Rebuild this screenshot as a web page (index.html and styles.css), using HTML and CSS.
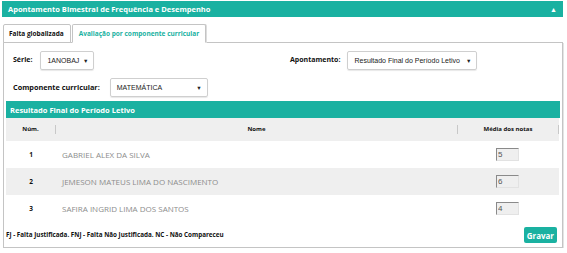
FILE: index.html
```html
<!DOCTYPE html>
<html lang="pt-BR">
<head>
  <meta charset="UTF-8" />
  <title>Apontamento Bimestral</title>
  <link rel="stylesheet" href="styles.css">
</head>
<body>
  <div class="panel">
    <div class="panel-head">
      <span>Apontamento Bimestral de Frequência e Desempenho</span>
      <span class="caret">&#9650;</span>
    </div>

    <div class="tabs">
      <div class="tab">Falta globalizada</div>
      <div class="tab active">Avaliação por componente curricular</div>
    </div>

    <div class="tab-body">
      <div class="filters">
        <div class="field serie">
          <label>Série:</label>
          <div class="select w-serie"><span>1ANOBAJ</span><span class="arrow">&#9660;</span></div>
        </div>
        <div class="field apont">
          <label>Apontamento:</label>
          <div class="select w-apont"><span>Resultado Final do Período Letivo</span><span class="arrow">&#9660;</span></div>
        </div>
      </div>
      <div class="filters second">
        <div class="field comp">
          <label>Componente curricular:</label>
          <div class="select w-comp"><span>MATEMÁTICA</span><span class="arrow">&#9660;</span></div>
        </div>
      </div>

      <div class="result-bar">Resultado Final do Período Letivo</div>

      <table class="grid">
        <thead>
          <tr>
            <th class="c-num"><span class="sep">Núm.</span></th>
            <th class="c-nome"><span class="sep">Nome</span></th>
            <th class="c-media"><span class="sep">Média dos notas</span></th>
          </tr>
        </thead>
        <tbody>
          <tr>
            <td class="c-num">1</td>
            <td class="c-nome">GABRIEL ALEX DA SILVA</td>
            <td class="c-media"><input type="text" value="5" /></td>
          </tr>
          <tr class="alt">
            <td class="c-num">2</td>
            <td class="c-nome">JEMESON MATEUS LIMA DO NASCIMENTO</td>
            <td class="c-media"><input type="text" value="6" /></td>
          </tr>
          <tr>
            <td class="c-num">3</td>
            <td class="c-nome">SAFIRA INGRID LIMA DOS SANTOS</td>
            <td class="c-media"><input type="text" value="4" /></td>
          </tr>
        </tbody>
      </table>

      <div class="foot">
        <p class="legend">FJ - Falta Justificada. FNJ - Falta Não Justificada. NC - Não Compareceu</p>
        <button type="button">Gravar</button>
      </div>
    </div>
  </div>
</body>
</html>
```

FILE: styles.css
```css
body {
  margin: 0;
  font-family: "Open Sans", Arial, sans-serif;
  background: #fff;
}
.panel {
  width: 561px;
  margin: 1px 0 0 2px;
}
.panel-head {
  height: 16px;
  background: #1ab1a1;
  color: #fff;
  font-size: 7.5px;
  font-weight: 700;
  display: flex;
  align-items: center;
  justify-content: space-between;
  padding: 0 6px 0 6px;
}
.caret {
  font-size: 7px;
}
.tabs {
  display: flex;
  margin-top: 7px;
  padding-left: 1px;
  height: 19px;
}
.tab {
  border: 1px solid #c4c4c4;
  background: #fff;
  font-size: 6.5px;
  font-weight: 700;
  color: #111;
  padding: 0 6px 0 5px;
  display: flex;
  align-items: center;
  border-radius: 2px 2px 0 0;
}
.tab.active {
  color: #1ab1a1;
  border-bottom-color: #fff;
  margin-left: 1px;
  padding: 0 6px;
  box-shadow: 1px 0 0 #ddd;
  position: relative;
  z-index: 1;
}
.tab-body {
  margin-left: 1px;
  border: 1px solid #c4c4c4;
  margin-top: -1px;
  padding: 0 2px;
  height: 204px;
  box-shadow: 1px 1px 0 #e4e4e4;
}
.filters {
  display: flex;
  padding: 8px 0 0 7px;
}
.filters.second {
  padding-top: 8px;
}
.field {
  display: flex;
  align-items: flex-start;
}
.field label {
  font-size: 7px;
  font-weight: 700;
  color: #111;
  margin-right: 8px;
  padding-top: 4px;
}
.serie {
  width: 277px;
}
.apont label {
  margin-right: 7px;
}
.comp label {
  font-size: 7.3px;
  margin-right: 10px;
}
.select {
  box-sizing: border-box;
  height: 19px;
  border: 1px solid #cfcfcf;
  border-radius: 2px;
  display: flex;
  align-items: center;
  justify-content: space-between;
  padding: 0 5px 0 6px;
  font-family: Arial, "Liberation Sans", sans-serif;
  font-size: 7px;
  color: #222;
  white-space: nowrap;
  box-shadow: 0 1px 1px #e8e8e8;
}
.arrow {
  font-size: 5.5px;
}
.w-serie { width: 54px; }
.w-apont { width: 130px; }
.w-comp { width: 98px; }
.result-bar {
  margin-top: 4px;
  height: 17px;
  background: #1ab1a1;
  color: #fff;
  font-size: 7.5px;
  font-weight: 700;
  display: flex;
  align-items: center;
  padding-left: 4px;
}
.grid {
  width: 553px;
  border-collapse: collapse;
}
.grid th {
  background: #efefef;
  height: 23px;
  font-size: 6px;
  font-weight: 700;
  color: #111;
  padding: 0;
}
.grid th .sep {
  display: block;
  border-right: 1px solid #c8c8c8;
  line-height: 9px;
}
.grid td {
  height: 27px;
  padding: 0;
  font-size: 8px;
}
.grid tr.alt td {
  background: #efefef;
}
.c-num {
  width: 50px;
  text-align: center;
}
td.c-num {
  font-size: 6.5px;
  font-weight: 700;
  color: #111;
}
.c-nome {
  width: 396px;
}
td.c-nome {
  color: #8c8c8c;
  padding-left: 6px !important;
}
.c-media {
  text-align: center;
}
.grid input {
  box-sizing: border-box;
  width: 23px;
  height: 13px;
  background: #efefef;
  border: 1px solid #e2e2e2;
  border-top-color: #8a8a8a;
  border-left-color: #8a8a8a;
  font-family: Arial, sans-serif;
  font-size: 8px;
  color: #555;
  padding: 0 1px;
  margin-right: 2px;
}
.foot {
  display: flex;
  justify-content: space-between;
  align-items: flex-start;
  padding: 0 3px 0 0;
}
.legend {
  margin: 8px 0 0 0;
  font-size: 6.3px;
  font-weight: 700;
  color: #111;
}
button {
  margin-top: 5px;
  background: #1ab1a1;
  color: #fff;
  border: 0;
  border-radius: 2px;
  font-family: "Open Sans", Arial, sans-serif;
  font-weight: 700;
  font-size: 8px;
  height: 16px;
  padding: 0 3px;
}
```
